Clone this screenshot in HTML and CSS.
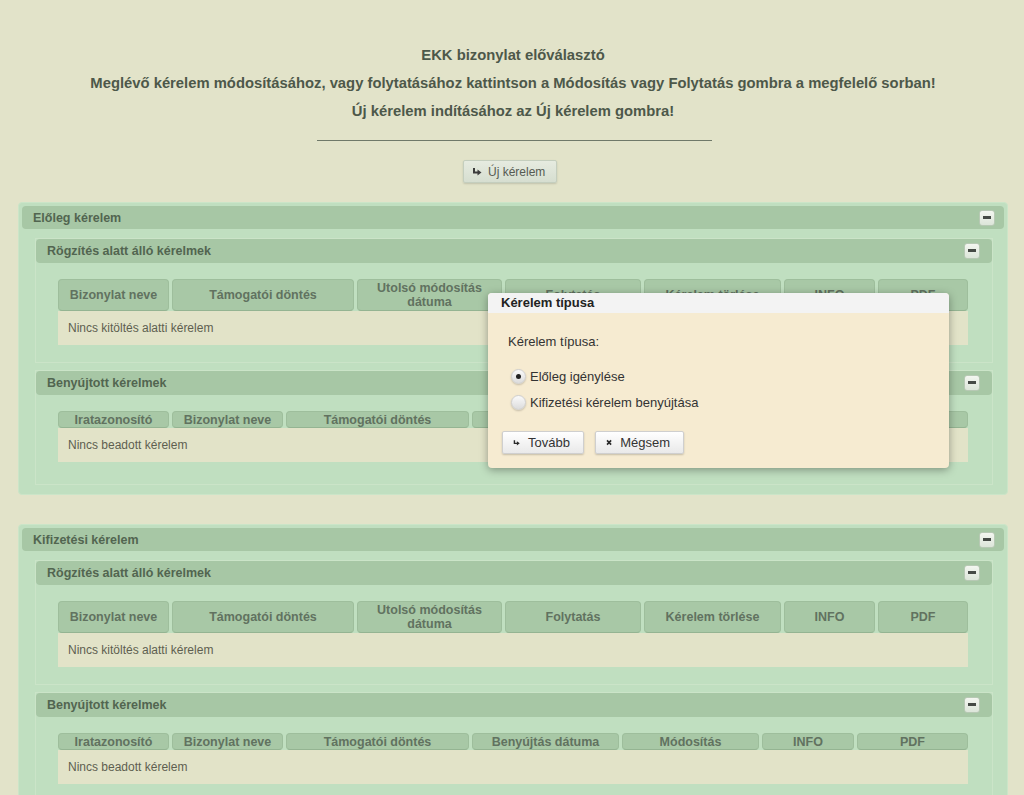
FILE: index.html
```html
<!DOCTYPE html>
<html lang="hu">
<head>
<meta charset="utf-8">
<title>EKK bizonylat előválasztó</title>
<link rel="stylesheet" href="styles.css">
</head>
<body>
<div class="page">
  <div class="intro">
    <p>EKK bizonylat előválasztó</p>
    <p>Meglévő kérelem módosításához, vagy folytatásához kattintson a Módosítás vagy Folytatás gombra a megfelelő sorban!</p>
    <p>Új kérelem indításához az Új kérelem gombra!</p>
    <div class="rule"></div>
    <button class="btn btn-new"><svg class="ico" width="10" height="10" viewBox="0 0 10 10"><path d="M2 1 V5.5 H6" fill="none" stroke="#3c3c3c" stroke-width="2"/><path d="M5.5 2.5 L9.5 5.5 L5.5 8.5 Z" fill="#3c3c3c"/></svg>Új kérelem</button>
  </div>

  <section class="panel outer">
    <div class="phead"><span>Előleg kérelem</span><span class="toggle"></span></div>
    <div class="pbody">
      <section class="panel inner">
        <div class="phead"><span>Rögzítés alatt álló kérelmek</span><span class="toggle"></span></div>
        <div class="ibody">
          <div class="grid g1">
            <div class="th">Bizonylat neve</div>
            <div class="th">Támogatói döntés</div>
            <div class="th">Utolsó módosítás<br>dátuma</div>
            <div class="th">Folytatás</div>
            <div class="th">Kérelem törlése</div>
            <div class="th">INFO</div>
            <div class="th">PDF</div>
            <div class="empty">Nincs kitöltés alatti kérelem</div>
          </div>
        </div>
      </section>
      <section class="panel inner">
        <div class="phead"><span>Benyújtott kérelmek</span><span class="toggle"></span></div>
        <div class="ibody last">
          <div class="grid g2">
            <div class="th">Iratazonosító</div>
            <div class="th">Bizonylat neve</div>
            <div class="th">Támogatói döntés</div>
            <div class="th">Benyújtás dátuma</div>
            <div class="th">Módosítás</div>
            <div class="th">INFO</div>
            <div class="th">PDF</div>
            <div class="empty">Nincs beadott kérelem</div>
          </div>
        </div>
      </section>
    </div>
  </section>

  <section class="panel outer">
    <div class="phead"><span>Kifizetési kérelem</span><span class="toggle"></span></div>
    <div class="pbody">
      <section class="panel inner">
        <div class="phead"><span>Rögzítés alatt álló kérelmek</span><span class="toggle"></span></div>
        <div class="ibody">
          <div class="grid g1">
            <div class="th">Bizonylat neve</div>
            <div class="th">Támogatói döntés</div>
            <div class="th">Utolsó módosítás<br>dátuma</div>
            <div class="th">Folytatás</div>
            <div class="th">Kérelem törlése</div>
            <div class="th">INFO</div>
            <div class="th">PDF</div>
            <div class="empty">Nincs kitöltés alatti kérelem</div>
          </div>
        </div>
      </section>
      <section class="panel inner">
        <div class="phead"><span>Benyújtott kérelmek</span><span class="toggle"></span></div>
        <div class="ibody last">
          <div class="grid g2">
            <div class="th">Iratazonosító</div>
            <div class="th">Bizonylat neve</div>
            <div class="th">Támogatói döntés</div>
            <div class="th">Benyújtás dátuma</div>
            <div class="th">Módosítás</div>
            <div class="th">INFO</div>
            <div class="th">PDF</div>
            <div class="empty">Nincs beadott kérelem</div>
          </div>
        </div>
      </section>
    </div>
  </section>

  <div class="dialog">
    <div class="dtitle">Kérelem típusa</div>
    <div class="dbody">
      <div class="dlabel">Kérelem típusa:</div>
      <div class="radios">
        <label class="radio"><span class="rbox on"></span>Előleg igénylése</label>
        <label class="radio"><span class="rbox"></span>Kifizetési kérelem benyújtása</label>
      </div>
      <div class="dbtns">
        <button class="btn dbtn"><svg class="ico" width="10" height="10" viewBox="0 0 10 10"><path d="M2 1 V5.5 H6" fill="none" stroke="#2a2a2a" stroke-width="2"/><path d="M5.5 2.5 L9.5 5.5 L5.5 8.5 Z" fill="#2a2a2a"/></svg>Tovább</button>
        <button class="btn dbtn"><svg class="ico" width="9" height="9" viewBox="0 0 9 9"><path d="M1.5 1.5 L7.5 7.5 M7.5 1.5 L1.5 7.5" stroke="#2a2a2a" stroke-width="2.4"/></svg>Mégsem</button>
      </div>
    </div>
  </div>
</div>
</body>
</html>
```
FILE: styles.css
```css
* { box-sizing: border-box; }
html, body { margin: 0; padding: 0; }
body {
  background: #e2e3c9;
  font-family: "Liberation Sans", Arial, sans-serif;
  color: #4d584a;
  overflow: hidden;
}
.page {
  position: relative;
  padding: 41px 16px 0 18px;
}
.intro {
  display: flex;
  flex-direction: column;
  align-items: center;
}
.intro p {
  margin: 0;
  font-size: 14.8px;
  font-weight: bold;
  line-height: 28px;
  text-align: center;
}
.rule {
  width: 395px;
  height: 1px;
  background: #6f7969;
  margin-top: 15px;
  margin-left: 2px;
}
.btn {
  font-family: "Liberation Sans", Arial, sans-serif;
  display: inline-flex;
  align-items: center;
  cursor: pointer;
}
.btn-new {
  margin-top: 19px;
  height: 23px;
  width: 94px;
  padding: 0 0 0 8px;
  font-size: 12px;
  color: #555a52;
  background: linear-gradient(#e6ebe0, #d6ded0);
  border: 1px solid #c4cebe;
  border-radius: 2px;
  box-shadow: 0 1px 2px rgba(0,0,0,0.15);
  margin-left: -6px;
}
.btn-new .ico { margin-right: 6px; }

.panel { background: #c0dfc0; }
.outer {
  margin-top: 19px;
  border: 1px solid #cbe5c8;
  border-radius: 4px;
  padding: 3px;
}
.outer + .outer { margin-top: 29px; }
.phead {
  display: flex;
  align-items: center;
  justify-content: space-between;
  background: #a7c7a5;
  border-radius: 4px;
  font-size: 12.5px;
  font-weight: bold;
  color: #526550;
}
.outer > .phead {
  height: 23px;
  padding: 0 9px 0 11px;
}
.pbody {
  padding: 9px 11px 6px 13px;
  display: flex;
  flex-direction: column;
  gap: 7px;
}
.inner {
  border: 1px solid #cbe4c8;
}
.inner > .phead {
  height: 24px;
  padding: 0 12px 0 11px;
}
.toggle {
  position: relative;
  width: 16px;
  height: 16px;
  border-radius: 3px;
  background: linear-gradient(#f3f6f0, #dce5d9);
  border: 1px solid #b7c9b4;
}
.toggle::after {
  content: "";
  position: absolute;
  left: 3px;
  top: 5px;
  width: 8px;
  height: 3px;
  background: #454a45;
}
.ibody {
  padding: 16px 22px 17px 22px;
}
.ibody.last { padding-bottom: 22px; }
.grid {
  display: grid;
  column-gap: 3px;
}
.g1 { grid-template-columns: 111px 182px 145px 136px 137px 91px 90px; }
.g2 { grid-template-columns: 111px 111px 183px 147px 137px 92px 111px; }
.th {
  display: flex;
  align-items: center;
  justify-content: center;
  text-align: center;
  background: #a8c8a6;
  border: 1px solid #9ebe9c;
  border-bottom-color: #94b492;
  border-radius: 4px;
  font-size: 12.5px;
  font-weight: bold;
  color: #617260;
  line-height: 14px;
  min-height: 17px;
}
.g1 .th { min-height: 32px; }
.empty {
  grid-column: 1 / -1;
  background: #e2e3c8;
  height: 34px;
  display: flex;
  align-items: center;
  padding-left: 10px;
  font-size: 12px;
  color: #5e5f50;
}

.dialog {
  position: absolute;
  left: 488px;
  top: 293px;
  width: 461px;
  height: 175px;
  background: #f6ebd1;
  border-radius: 4px;
  box-shadow: 0 2px 8px rgba(0,0,0,0.35);
  overflow: hidden;
}
.dtitle {
  height: 20px;
  background: #f3f3f3;
  padding-left: 13px;
  font-size: 13px;
  font-weight: bold;
  color: #222;
  line-height: 20px;
}
.dbody {
  padding: 21px 14px 0 14px;
}
.dlabel {
  font-size: 13px;
  line-height: 16px;
  color: #333;
  padding-left: 6px;
}
.radios {
  margin-top: 13px;
  display: flex;
  flex-direction: column;
}
.radio {
  display: flex;
  align-items: center;
  height: 26px;
  font-size: 13px;
  color: #333;
  padding-left: 9px;
}
.rbox {
  position: relative;
  width: 15px;
  height: 15px;
  border-radius: 50%;
  background: linear-gradient(#fafafa, #dcdcdc);
  border: 1px solid #cfcfcf;
  box-shadow: 0 1px 2px rgba(0,0,0,0.2);
  margin-right: 4px;
}
.rbox.on::after {
  content: "";
  position: absolute;
  left: 4px;
  top: 4px;
  width: 5px;
  height: 5px;
  border-radius: 50%;
  background: #222;
}
.dbtns {
  display: flex;
  gap: 11px;
  margin-top: 16px;
}
.dbtn {
  height: 23px;
  padding: 0 13px 0 10px;
  font-size: 13px;
  color: #333;
  background: linear-gradient(#ffffff, #e9e9e9);
  border: 1px solid #cfcfcf;
  border-radius: 2px;
  box-shadow: 0 1px 2px rgba(0,0,0,0.2);
}
.dbtn:first-child { width: 82px; }
.dbtn:last-child { width: 89px; }
.dbtn .ico { margin-right: 8px; }
```
